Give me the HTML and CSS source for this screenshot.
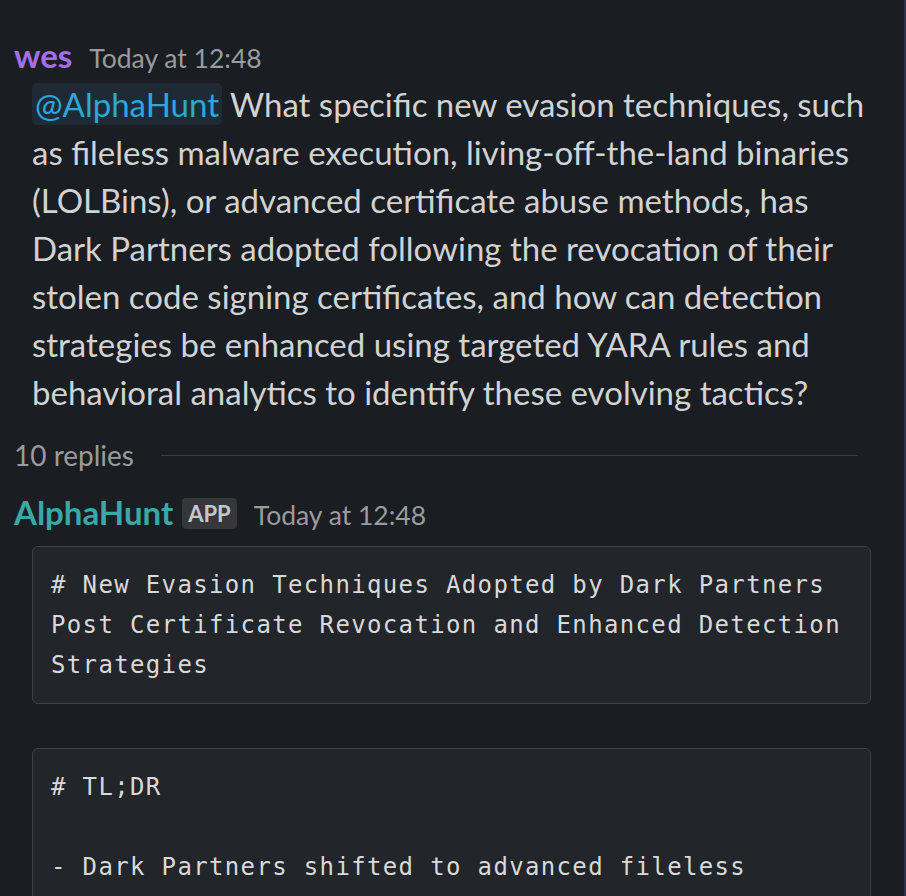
FILE: index.html
```html
<!DOCTYPE html>
<html>
<head>
<meta charset="utf-8">
<link rel="stylesheet" href="styles.css">
</head>
<body>
<div class="pane">
  <div class="msg first">
    <div class="head"><span class="name wes">wes</span><span class="time">Today at 12:48</span></div>
    <div class="text"><span class="mention">@AlphaHunt</span> What specific new evasion techniques, such as fileless malware execution, living-off-the-land binaries (LOLBins), or advanced certificate abuse methods, has Dark Partners adopted following the revocation of their stolen code signing certificates, and how can detection strategies be enhanced using targeted YARA rules and behavioral analytics to identify these evolving tactics?</div>
  </div>
  <div class="replies"><span class="count">10 replies</span><span class="rule"></span></div>
  <div class="msg">
    <div class="head"><span class="name bot">AlphaHunt</span><span class="badge">APP</span><span class="time">Today at 12:48</span></div>
    <pre class="code"># New Evasion Techniques Adopted by Dark Partners
Post Certificate Revocation and Enhanced Detection
Strategies</pre>
    <pre class="code second"># TL;DR

- Dark Partners shifted to advanced fileless
  loaders leveraging PS1 scripts</pre>
  </div>
</div>
</body>
</html>
```
FILE: styles.css
```css
html, body {
  margin: 0;
  padding: 0;
  background: #1a1d21;
  overflow: hidden;
  height: 896px;
}
.pane {
  height: 896px;
  overflow: hidden;
  border-right: 2px solid #2c3150;
  box-sizing: border-box;
  font-family: Lato, "Noto Sans", sans-serif;
  color: #d1d2d3;
  padding: 32px 0 0 14px;
}
.head {
  display: flex;
  align-items: baseline;
  height: 48px;
}
.name {
  font-weight: 700;
  font-size: 33px;
  line-height: 46px;
}
.wes { color: #a56de8; }
.bot { color: #3ca6a8; }
.time {
  font-size: 26.5px;
  color: #9a9b9e;
  margin-left: 17px;
}
.badge {
  align-self: center;
  margin-left: 9px;
  background: #35373b;
  color: #c6c7c8;
  font-size: 22px;
  font-weight: 700;
  padding: 0 6px;
  border-radius: 4px;
  line-height: 31px;
}
.badge + .time { margin-left: 17px; }
.text {
  margin-left: 18px;
  font-size: 33px;
  line-height: 48px;
  color: #d1d2d3;
  padding-right: 30px;
}
.mention {
  color: #2fa6d9;
  background: #1e2b36;
  border-radius: 5px;
  padding: 1px 3px;
}
.replies {
  display: flex;
  align-items: center;
  margin-top: 16px;
  height: 46px;
  padding-right: 46px;
}
.count {
  font-size: 28px;
  color: #9a9b9e;
}
.rule {
  flex: 1;
  height: 1px;
  background: #3a3c40;
  margin-left: 27px;
}
.replies + .msg { margin-top: 11px; }
.code {
  margin: 9px 33px 0 18px;
  background: #222529;
  border: 1px solid #3f4145;
  border-radius: 6px;
  font-family: "DejaVu Sans Mono", monospace;
  font-size: 24px;
  letter-spacing: 1.35px;
  line-height: 40px;
  color: #d9d9da;
  padding: 18px 18px 18px;
  white-space: pre-wrap;
}
.code.second { margin-top: 44px; }
```
